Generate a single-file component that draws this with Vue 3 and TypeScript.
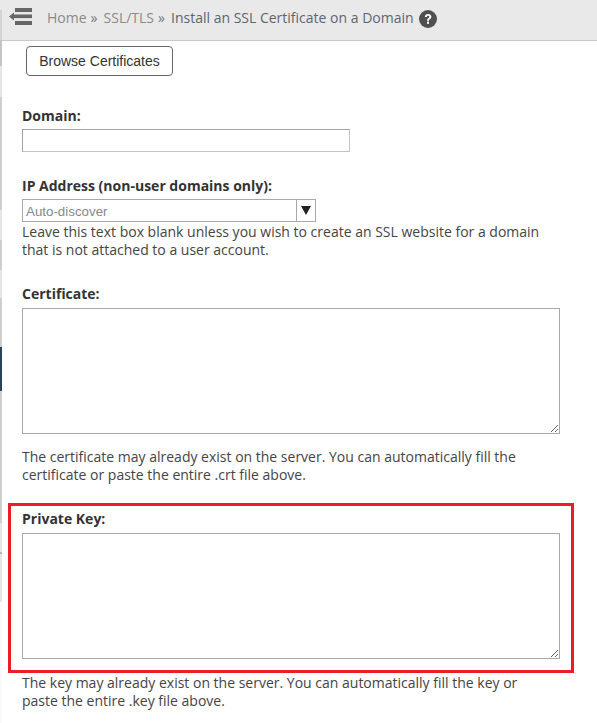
<script setup lang="ts">
interface Crumb { label: string; current?: boolean }
const crumbs: Crumb[] = [
  { label: 'Home' },
  { label: 'SSL/TLS' },
  { label: 'Install an SSL Certificate on a Domain', current: true },
]
</script>

<template>
  <div class="page">
    <div class="rail"></div>
    <header class="topbar">
      <svg class="menu" width="23" height="17" viewBox="0 0 23 17" aria-hidden="true">
        <path d="M0 8.5 L5 4.5 V12.5 Z" fill="#666" />
        <rect x="6" y="0" width="17" height="4" fill="#666" />
        <rect x="5" y="6.5" width="18" height="3.6" fill="#666" />
        <rect x="6" y="13" width="17" height="4" fill="#666" />
      </svg>
      <nav class="crumbs">
        <template v-for="c in crumbs" :key="c.label">
          <span :class="c.current ? 'current' : 'link'">{{ c.label }}</span>
          <span v-if="!c.current" class="sep">»</span>
        </template>
      </nav>
      <svg class="help" width="18" height="18" viewBox="0 0 18 18" aria-hidden="true">
        <circle cx="9" cy="9" r="9" fill="#505050" />
        <path d="M5.8 6.9 C5.9 5 7.2 3.9 9.1 3.9 C11 3.9 12.4 5 12.4 6.7 C12.4 8 11.6 8.6 10.8 9.2 C10.2 9.6 10 9.9 10 10.7 H8 C8 9.4 8.4 8.8 9.3 8.2 C10 7.7 10.3 7.4 10.3 6.8 C10.3 6.2 9.8 5.8 9.1 5.8 C8.3 5.8 7.9 6.3 7.8 7.1 Z" fill="#fff" />
        <rect x="8" y="11.6" width="2" height="2.2" fill="#fff" />
      </svg>
    </header>

    <main class="content">
      <button class="browse" type="button">Browse Certificates</button>

      <section class="field domain">
        <label class="label">Domain:</label>
        <input class="input" type="text" />
      </section>

      <section class="field ip">
        <label class="label">IP Address (non-user domains only):</label>
        <div class="combo">
          <span class="combo-text">Auto-discover</span>
          <span class="combo-btn"><i class="arrow"></i></span>
        </div>
        <p class="help-text">Leave this text box blank unless you wish to create an SSL website for a domain that is not attached to a user account.</p>
      </section>

      <section class="field cert">
        <label class="label">Certificate:</label>
        <textarea class="area"></textarea>
        <p class="help-text below">The certificate may already exist on the server. You can automatically fill the certificate or paste the entire .crt file above.</p>
      </section>

      <section class="field key">
        <div class="highlight"></div>
        <label class="label">Private Key:</label>
        <textarea class="area"></textarea>
        <p class="help-text below">The key may already exist on the server. You can automatically fill the key or paste the entire .key file above.</p>
      </section>
    </main>
  </div>
</template>

<style>
html, body { margin: 0; background: #fff; }
</style>

<style scoped>
.page {
  position: relative;
  width: 597px;
  height: 723px;
  overflow: hidden;
  background: #fff;
  font-family: "Open Sans", sans-serif;
  color: #333;
}
.rail {
  position: absolute;
  left: 0;
  top: 0;
  z-index: 1;
  width: 2px;
  height: 723px;
  background: linear-gradient(
    to bottom,
    #e9e9e9 0 10px,
    #d4d4d4 10px 40px,
    #c4c4c4 40px 66px,
    #e6e6e6 66px 97px,
    #cfcfcf 97px 210px,
    #e6e6e6 210px 240px,
    #cfcfcf 240px 270px,
    #e6e6e6 270px 298px,
    #cfcfcf 298px 347px,
    #2b4257 347px 391px,
    #cfcfcf 391px 523px,
    #e6e6e6 523px 552px,
    #b5b5b5 552px 554px,
    #e6e6e6 554px 602px,
    #fafafa 602px
  );
}
.topbar {
  position: relative;
  display: flex;
  align-items: center;
  box-sizing: border-box;
  padding: 0 0 0 9px;
  background: #e9e9e9;
  border-bottom: 1px solid #c9c9c9;
  height: 41px;
}
.menu { margin-top: -7px; margin-right: 15px; }
.crumbs { display: flex; align-items: center; font-size: 14px; white-space: nowrap; margin-top: -5px; }
.link { color: #8a8a8a; }
.current { color: #5b6670; }
.sep { color: #777; margin: 0 6px 0 4px; }
.help { margin-left: 5px; margin-top: -3px; }
.content { position: relative; padding: 5px 0 0 22px; }
.browse {
  display: block;
  margin-left: 4px;
  width: 147px;
  height: 30px;
  box-sizing: border-box;
  background: #fff;
  border: 1px solid #666;
  border-radius: 4px;
  font-family: "Liberation Sans", Arial, sans-serif;
  font-size: 14px;
  color: #333;
  padding: 0;
}
.field { position: relative; }
.label { display: block; font-size: 14px; font-weight: 700; line-height: 19px; color: #333; }
.domain { margin-top: 30px; }
.input {
  display: block;
  box-sizing: border-box;
  width: 328px;
  height: 23px;
  margin-top: 4px;
  border: 1px solid #c4c4c4;
  border-top-color: #a3a3a3;
  border-left-color: #a3a3a3;
  background: #fff;
  padding: 0;
  outline: none;
}
.ip { margin-top: 24px; }
.combo {
  display: flex;
  box-sizing: border-box;
  width: 294px;
  height: 23px;
  margin-top: 4px;
  margin-bottom: 1px;
  border: 1px solid #a9a9a9;
}
.combo-text {
  flex: 1;
  padding-left: 3px;
  font-family: "Liberation Sans", Arial, sans-serif;
  font-size: 13.33px;
  line-height: 23px;
  color: #888;
}
.combo-btn {
  display: flex;
  align-items: center;
  justify-content: center;
  width: 18px;
  border-left: 1px solid #a9a9a9;
}
.arrow {
  width: 0;
  height: 0;
  border-left: 5px solid transparent;
  border-right: 5px solid transparent;
  border-top: 9px solid #222;
}
.help-text {
  margin: 0;
  width: 530px;
  font-size: 14px;
  line-height: 18px;
  color: #444;
}
.cert { margin-top: 25px; }
.key { margin-top: 25px; }
.area {
  display: block;
  box-sizing: border-box;
  width: 538px;
  height: 126px;
  margin-top: 5px;
  border: 1px solid #a9a9a9;
  padding: 0;
  outline: none;
  background: #fff;
}
.below { margin-top: 14px; }
.key .below { margin-top: 15px; }
.highlight {
  position: absolute;
  left: -14px;
  top: -6px;
  width: 566px;
  height: 170px;
  box-sizing: border-box;
  border: 3px solid #ed1c24;
  pointer-events: none;
}
</style>
